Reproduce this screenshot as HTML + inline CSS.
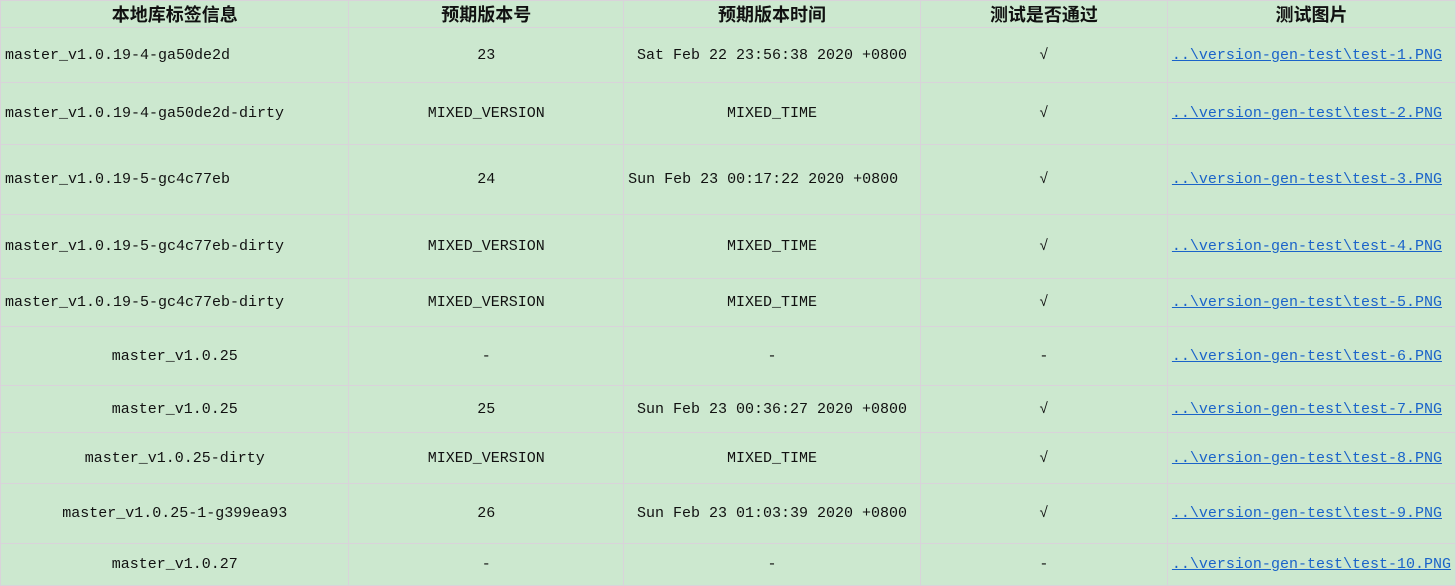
<!DOCTYPE html>
<html><head><meta charset="utf-8"><style>
body{margin:0;width:1456px;height:586px;background:#cce8cf;overflow:hidden;font-family:"Liberation Mono","Noto Serif CJK SC",monospace;font-size:15px;color:#111;}
table{border-collapse:collapse;table-layout:fixed;position:absolute;left:0;top:0;}
td{border:1px solid #d9d3da;padding:0 4px;white-space:nowrap;overflow:visible;text-align:center;}
th{border:1px solid #d9d3da;height:26px;font-family:"Liberation Sans","Noto Sans CJK SC",sans-serif;font-weight:bold;font-size:18px;padding:0;}
.l{text-align:left;padding-left:4px;}
a{color:#1a63c9;text-decoration:underline;}
</style></head><body>
<table>
<colgroup><col style="width:349px"><col style="width:276px"><col style="width:297px"><col style="width:249px"><col style="width:285px"></colgroup>
<tr><th>本地库标签信息</th><th>预期版本号</th><th>预期版本时间</th><th>测试是否通过</th><th>测试图片</th></tr>
<tr style="height:55px"><td class="l">master_v1.0.19-4-ga50de2d</td><td>23</td><td>Sat Feb 22 23:56:38 2020 +0800</td><td>√</td><td class="l"><a>..\version-gen-test\test-1.PNG</a></td></tr>
<tr style="height:62px"><td class="l">master_v1.0.19-4-ga50de2d-dirty</td><td>MIXED_VERSION</td><td>MIXED_TIME</td><td>√</td><td class="l"><a>..\version-gen-test\test-2.PNG</a></td></tr>
<tr style="height:70px"><td class="l">master_v1.0.19-5-gc4c77eb</td><td>24</td><td class="l">Sun Feb 23 00:17:22 2020 +0800</td><td>√</td><td class="l"><a>..\version-gen-test\test-3.PNG</a></td></tr>
<tr style="height:64px"><td class="l">master_v1.0.19-5-gc4c77eb-dirty</td><td>MIXED_VERSION</td><td>MIXED_TIME</td><td>√</td><td class="l"><a>..\version-gen-test\test-4.PNG</a></td></tr>
<tr style="height:48px"><td class="l">master_v1.0.19-5-gc4c77eb-dirty</td><td>MIXED_VERSION</td><td>MIXED_TIME</td><td>√</td><td class="l"><a>..\version-gen-test\test-5.PNG</a></td></tr>
<tr style="height:59px"><td>master_v1.0.25</td><td>-</td><td>-</td><td>-</td><td class="l"><a>..\version-gen-test\test-6.PNG</a></td></tr>
<tr style="height:47px"><td>master_v1.0.25</td><td>25</td><td>Sun Feb 23 00:36:27 2020 +0800</td><td>√</td><td class="l"><a>..\version-gen-test\test-7.PNG</a></td></tr>
<tr style="height:51px"><td>master_v1.0.25-dirty</td><td>MIXED_VERSION</td><td>MIXED_TIME</td><td>√</td><td class="l"><a>..\version-gen-test\test-8.PNG</a></td></tr>
<tr style="height:60px"><td>master_v1.0.25-1-g399ea93</td><td>26</td><td>Sun Feb 23 01:03:39 2020 +0800</td><td>√</td><td class="l"><a>..\version-gen-test\test-9.PNG</a></td></tr>
<tr style="height:42px"><td>master_v1.0.27</td><td>-</td><td>-</td><td>-</td><td class="l"><a>..\version-gen-test\test-10.PNG</a></td></tr>
</table>
</body></html>
